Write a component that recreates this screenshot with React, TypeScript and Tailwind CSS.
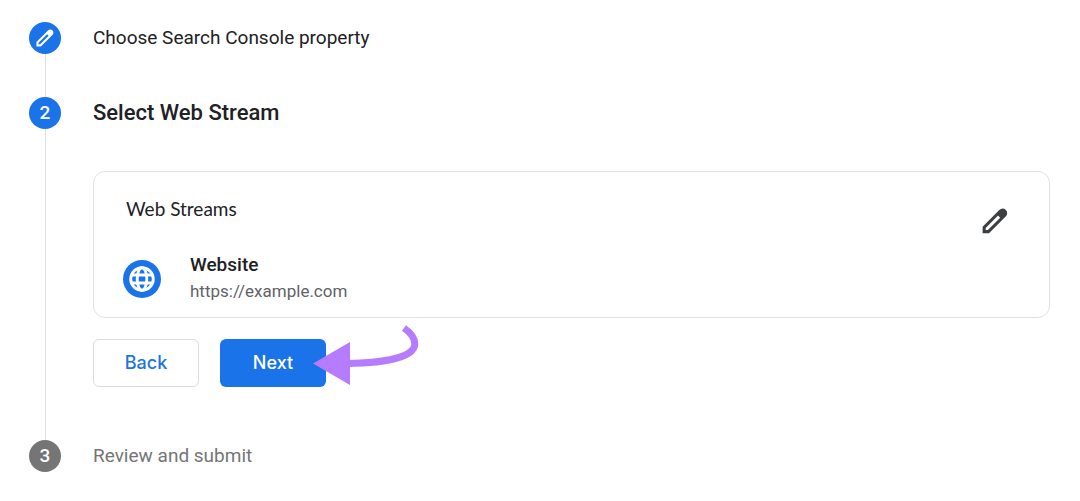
import type { ReactNode } from "react";

function PencilIcon({ className }: { className: string }) {
  return (
    <svg viewBox="0 0 26 26" className={className} fill="currentColor" fillRule="evenodd" aria-hidden="true">
      <path d="M0.6 25.2V18.8L17.3 2.1Q18.8 0.6 20.8 0.6Q22.4 0.6 23.6 1.8L24 2.2Q25.2 3.4 25.2 5Q25.2 7 23.7 8.5L7 25.2ZM3.7 22.1H5.9L18.2 9.8L16 7.6L3.7 19.9Z" />
    </svg>
  );
}

function GlobeIcon({ className }: { className: string }) {
  return (
    <svg viewBox="0 0 26 26" className={className} fill="none" stroke="currentColor" strokeWidth="2.9" aria-hidden="true">
      <circle cx="13" cy="13" r="11.3" />
      <ellipse cx="13" cy="13" rx="4.8" ry="11.3" />
      <path d="M2 9H24M2 17H24" />
    </svg>
  );
}

function PointerArrow({ className }: { className: string }) {
  return (
    <svg viewBox="0 0 108 64" className={className} aria-hidden="true">
      <path d="M1 39.5L38 18V61Z" fill="#b67cff" />
      <path d="M36 39.4C66 39 99 35 102.5 22C104 15 99 9 92 4" fill="none" stroke="#b67cff" strokeWidth="7" />
    </svg>
  );
}

type StepProps = {
  marker: ReactNode;
  markerClass: string;
  title: string;
  titleClass: string;
  bodyClass?: string;
  last?: boolean;
  children?: ReactNode;
};

function Step({ marker, markerClass, title, titleClass, bodyClass = "", last, children }: StepProps) {
  return (
    <li className="flex gap-8">
      <div className="flex flex-col items-center">
        <span className={`flex size-8 shrink-0 items-center justify-center rounded-full text-[19px] font-medium text-white ${markerClass}`}>
          {marker}
        </span>
        {!last && <span className="w-px flex-1 bg-[#e0e0e0]" />}
      </div>
      <div className={`min-w-0 flex-1 ${bodyClass}`}>
        <h2 className={`leading-8 ${titleClass}`}>{title}</h2>
        {children}
      </div>
    </li>
  );
}

export default function App() {
  return (
    <main className="min-h-screen bg-white py-[22px] pr-[30px] pl-[29px] font-['Roboto',sans-serif] text-[#202124]">
      <ol>
        <Step
          marker={<PencilIcon className="size-[18px]" />}
          markerClass="bg-[#1a73e8]"
          title="Choose Search Console property"
          titleClass="text-[19px]"
          bodyClass="pb-[43px]"
        />
        <Step
          marker="2"
          markerClass="bg-[#1a73e8]"
          title="Select Web Stream"
          titleClass="text-[22px] font-medium"
          bodyClass="pb-[53px]"
        >
          <section className="mt-[42px] flex items-start justify-between rounded-xl border border-[#dfe1e5] pt-[21px] pr-[41px] pb-3 pl-[29px]">
            <div>
              <h3 className="pl-[3px] font-['Lato','Roboto',sans-serif] text-[19px] leading-8">Web Streams</h3>
              <div className="mt-7 flex items-center gap-[29px]">
                <span className="flex size-[38px] items-center justify-center rounded-full bg-[#1a73e8] text-white">
                  <GlobeIcon className="size-[26px]" />
                </span>
                <div>
                  <p className="text-[19px] leading-6 font-medium">Website</p>
                  <p className="text-[17px] leading-7 text-[#5f6368]">https://example.com</p>
                </div>
              </div>
            </div>
            <button type="button" aria-label="Edit web stream" className="mt-[15px] text-[#3c4043]">
              <PencilIcon className="size-[26px]" />
            </button>
          </section>
          <div className="mt-[21px] flex gap-[21px]">
            <button type="button" className="h-12 w-[106px] rounded-md border border-[#dadce0] font-['Inter','Roboto',sans-serif] text-lg font-medium text-[#1a73e8]">
              Back
            </button>
            <div className="relative">
              <button type="button" className="h-12 w-[106px] rounded-md bg-[#1a73e8] font-['Inter','Roboto',sans-serif] text-lg font-medium text-white">
                Next
              </button>
              <PointerArrow className="pointer-events-none absolute -top-[15px] left-[92px] h-16 w-[108px]" />
            </div>
          </div>
        </Step>
        <Step marker="3" markerClass="bg-[#757575]" title="Review and submit" titleClass="text-[19px] text-[#757575]" last />
      </ol>
    </main>
  );
}
